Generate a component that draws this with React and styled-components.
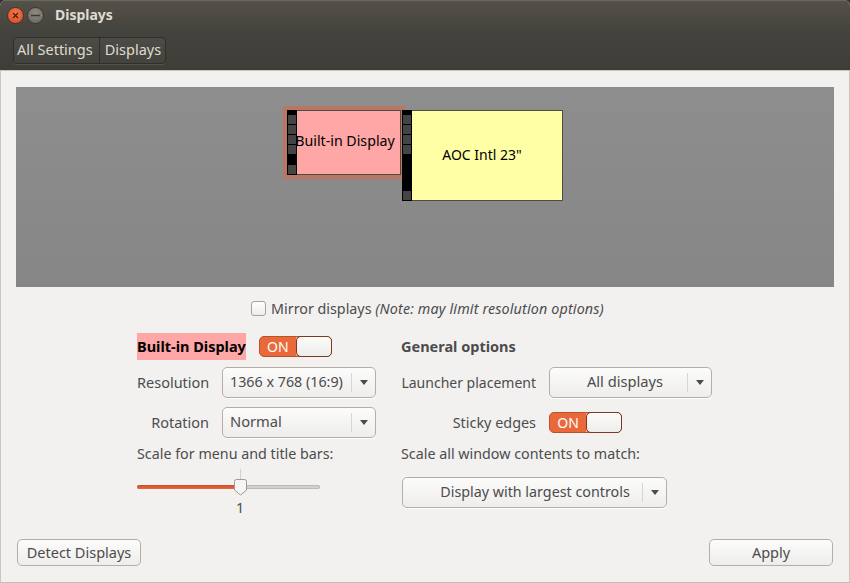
import React from "react"
import styled, { createGlobalStyle } from "styled-components"

const Global = createGlobalStyle`
  html, body {
    margin: 0;
    background: #3a2a38;
  }
  body {
    font-family: "Noto Sans", "Open Sans", sans-serif;
    font-size: 14.3px;
    color: #4c4c4c;
  }
`

const Window = styled.div`
  width: 850px;
  height: 583px;
  display: flex;
  flex-direction: column;
  overflow: hidden;
  border-radius: 6px 6px 0 0;
  background: #f2f1f0;
`

const TitleBar = styled.div`
  height: 30px;
  display: flex;
  align-items: center;
  padding-left: 7px;
  background: linear-gradient(#55524a, #45433d);
  box-shadow: inset 0 1px 0 #6a675f;
`

const WinButton = styled.div`
  width: 17px;
  height: 17px;
  margin-right: 3px;
  border-radius: 50%;
  display: flex;
  align-items: center;
  justify-content: center;
  border: 1px solid #3a3833;
  box-sizing: border-box;
  background: ${(p) =>
    p.$close
      ? "radial-gradient(circle at 50% 35%, #f47a4a, #d9451c)"
      : "radial-gradient(circle at 50% 35%, #8f8c84, #66635c)"};
`

const Title = styled.div`
  margin-left: 8px;
  padding-bottom: 2px;
  font-weight: 700;
  font-size: 14px;
  color: #dfdbd2;
`

const ToolBar = styled.div`
  height: 41px;
  display: flex;
  align-items: center;
  padding-left: 13px;
  box-sizing: border-box;
  background: linear-gradient(#45433d, #3f3d38);
  border-bottom: 1px solid #c9c6c0;
`

const Crumbs = styled.div`
  display: flex;
  height: 25px;
  border: 1px solid #2f2e2a;
  border-radius: 4px;
  box-shadow: 0 1px 0 #55534c;
  background: linear-gradient(#4d4b45, #45433d);
`

const Crumb = styled.div`
  padding: 0 6px 2px 3px;
  display: flex;
  align-items: center;
  font-size: 14.5px;
  color: #dfdbd2;
  & + & {
    padding: 0 4px 2px 5px;
    border-left: 1px solid #2f2e2a;
  }
`

const Content = styled.div`
  flex: 1;
  display: flex;
  flex-direction: column;
  padding: 16px;
  border-left: 1px solid #c9c6c0;
  border-right: 1px solid #c9c6c0;
  border-bottom: 1px solid #c0bdb8;
  box-sizing: border-box;
`

const Arrangement = styled.div`
  position: relative;
  height: 200px;
  margin: 0 -1px;
  background: linear-gradient(#8e8e8e, #868686);
`

const Monitor = styled.div`
  position: absolute;
  display: flex;
  box-sizing: border-box;
  border: 1px solid #4d4d40;
  color: #000;
  background: ${(p) => p.$bg};
  outline: ${(p) => (p.$selected ? "4px solid #b87765" : "none")};
`

const Film = styled.div`
  width: 10px;
  flex: none;
  margin: -1px 0 -1px -1px;
  display: flex;
  flex-direction: column;
  padding-top: 5px;
  gap: 1px;
  box-sizing: border-box;
  background: #000;
`

const Hole = styled.div`
  width: 8px;
  height: 9px;
  margin-left: 1px;
  background: #444;
  &:last-child {
    margin-top: auto;
    margin-bottom: 1px;
  }
`

const MonitorName = styled.div`
  flex: 1;
  display: flex;
  align-items: center;
  justify-content: center;
  white-space: nowrap;
  font-size: ${(p) => p.$size}px;
  margin-left: ${(p) => p.$shift}px;
  padding-bottom: ${(p) => p.$pb}px;
`

const MirrorRow = styled.div`
  height: 42px;
  padding-bottom: 2px;
  display: flex;
  align-items: center;
  justify-content: center;
  gap: 5px;
  margin-left: 5px;
`

const CheckBox = styled.div`
  width: 15px;
  height: 15px;
  box-sizing: border-box;
  border: 1px solid #a5a29c;
  border-radius: 3px;
  background: linear-gradient(#fff, #eeedeb);
`

const Note = styled.em`
  font-style: italic;
  letter-spacing: 0.15px;
`

const Columns = styled.div`
  display: grid;
  grid-template-columns: 264px 1fr;
  padding-left: 120px;
`

const Column = styled.div`
  display: flex;
  flex-direction: column;
`

const Row = styled.div`
  height: ${(p) => p.$h || 40}px;
  margin-top: ${(p) => p.$mt || 0}px;
  display: flex;
  align-items: center;
  white-space: nowrap;
`

const Heading = styled.div`
  font-weight: 700;
  font-size: 14.5px;
  color: ${(p) => (p.$hl ? "#000" : "#4c4c4c")};
  background: ${(p) => (p.$hl ? "#ffa6a6" : "none")};
  height: 27px;
  line-height: 27px;
  white-space: nowrap;
`

const Label = styled.div`
  width: ${(p) => p.$w}px;
  margin-right: 13px;
  text-align: right;
  white-space: nowrap;
  font-size: ${(p) => p.$size || 14.5}px;
`

const Combo = styled.div`
  width: ${(p) => p.$w}px;
  height: 31px;
  box-sizing: border-box;
  display: flex;
  align-items: center;
  border: 1px solid #b3afa8;
  border-radius: 5px;
  background: linear-gradient(#fcfcfb, #eeedeb);
  box-shadow: 0 1px 0 #fff;
  margin-left: ${(p) => p.$ml || 0}px;
`

const ComboText = styled.div`
  flex: 1;
  padding-left: ${(p) => p.$pl || 7}px;
  padding-bottom: 2px;
  text-align: ${(p) => (p.$center ? "center" : "left")};
  white-space: nowrap;
  font-size: ${(p) => p.$size || 14.3}px;
`

const ComboArrow = styled.div`
  width: 23px;
  height: 19px;
  flex: none;
  display: flex;
  align-items: center;
  justify-content: center;
  border-left: 1px solid #d8d6d2;
  &::after {
    content: "";
    border-left: 4.5px solid transparent;
    border-right: 4.5px solid transparent;
    border-top: 5px solid #4c4c4c;
  }
`

const Switch = styled.div`
  width: 73px;
  height: 21px;
  box-sizing: border-box;
  display: flex;
  border-radius: 5px;
  background: #e9693a;
  border: 1px solid #b5532d;
  margin-left: ${(p) => p.$ml || 0}px;
`

const SwitchText = styled.div`
  width: 37px;
  text-align: center;
  color: #fff;
  font-size: 14px;
  line-height: 19px;
  border-right: 1px solid #f4a98b;
  box-sizing: border-box;
`

const SwitchThumb = styled.div`
  flex: 1;
  margin: -1px;
  border: 1px solid #7c3a22;
  border-radius: 5px;
  background: linear-gradient(#fbfbfa, #eeedeb);
`

const Slider = styled.div`
  position: relative;
  width: 183px;
  height: 4px;
  border-radius: 2px;
  background: #d3d1cd;
  box-shadow: inset 0 0 0 1px #bdbab4;
`

const SliderFill = styled.div`
  height: 100%;
  border-radius: 2px;
  background: linear-gradient(#c9502a, #e9693a);
`

const Tick = styled.div`
  position: absolute;
  left: 103px;
  top: -16px;
  width: 1px;
  height: 10px;
  background: #d3d1cd;
`

const Thumb = styled.svg`
  position: absolute;
  left: 97px;
  top: -6px;
`

const SliderValue = styled.div`
  width: 206px;
  text-align: center;
  line-height: 18px;
`

const Footer = styled.div`
  margin-top: auto;
  display: flex;
  justify-content: space-between;
`

const Button = styled.div`
  width: 124px;
  height: 27px;
  padding-bottom: 2px;
  box-sizing: border-box;
  display: flex;
  align-items: center;
  justify-content: center;
  font-size: 14.5px;
  border: 1px solid #b3afa8;
  border-radius: 5px;
  background: linear-gradient(#fcfcfb, #eeedeb);
`

const holes = [0, 1, 2, 3, 4]

export default function App() {
  return (
    <Window>
      <Global />
      <TitleBar>
        <WinButton $close>
          <svg width="7" height="7" viewBox="0 0 7 7">
            <path d="M1 1 L6 6 M6 1 L1 6" stroke="#4a1c0c" strokeWidth="1.3" />
          </svg>
        </WinButton>
        <WinButton>
          <svg width="9" height="3" viewBox="0 0 9 3">
            <path d="M0 1.5 H9" stroke="#3c3b37" strokeWidth="1.3" />
          </svg>
        </WinButton>
        <Title>Displays</Title>
      </TitleBar>
      <ToolBar>
        <Crumbs>
          <Crumb>All Settings</Crumb>
          <Crumb>Displays</Crumb>
        </Crumbs>
      </ToolBar>
      <Content>
        <Arrangement>
          <Monitor
            $selected
            $bg="#ffa6a6"
            style={{ left: 271, top: 23, width: 114, height: 65 }}
          >
            <Film>
              {holes.map((h) => (
                <Hole key={h} />
              ))}
            </Film>
            <MonitorName $shift={-7} $size={14.2} $pb={5}>
              Built-in Display
            </MonitorName>
          </Monitor>
          <Monitor
            $bg="#ffffa6"
            style={{ left: 386, top: 23, width: 161, height: 91 }}
          >
            <Film>
              {holes.map((h) => (
                <Hole key={h} />
              ))}
            </Film>
            <MonitorName $shift={-10} $size={14} $pb={3}>
              AOC Intl 23"
            </MonitorName>
          </Monitor>
        </Arrangement>
        <MirrorRow>
          <CheckBox />
          <span>
            Mirror displays <Note>(Note: may limit resolution options)</Note>
          </span>
        </MirrorRow>
        <Columns>
          <Column>
            <Row $h={31}>
              <Heading $hl>Built-in Display</Heading>
              <Switch $ml={13}>
                <SwitchText>ON</SwitchText>
                <SwitchThumb />
              </Switch>
            </Row>
            <Row>
              <Label $w={72}>Resolution</Label>
              <Combo $w={154}>
                <ComboText>1366 x 768 (16:9)</ComboText>
                <ComboArrow />
              </Combo>
            </Row>
            <Row>
              <Label $w={72}>Rotation</Label>
              <Combo $w={154}>
                <ComboText $size={14.7}>Normal</ComboText>
                <ComboArrow />
              </Combo>
            </Row>
            <Row $h={22}>Scale for menu and title bars:</Row>
            <Row $h={24} $mt={11}>
              <Slider>
                <SliderFill style={{ width: "56%" }} />
                <Tick />
                <Thumb width="13" height="17" viewBox="0 0 13 17">
                  <path
                    d="M2.5 .5 H10.5 Q12.5 .5 12.5 2.5 V11 L6.5 16 L.5 11 V2.5 Q.5 .5 2.5 .5 Z"
                    fill="#f6f5f3"
                    stroke="#9c9992"
                  />
                </Thumb>
              </Slider>
            </Row>
            <SliderValue>1</SliderValue>
          </Column>
          <Column>
            <Row $h={31}>
              <Heading>General options</Heading>
            </Row>
            <Row>
              <Label $w={135} $size={14}>
                Launcher placement
              </Label>
              <Combo $w={163}>
                <ComboText $center $pl={13} $size={14.7}>
                  All displays
                </ComboText>
                <ComboArrow />
              </Combo>
            </Row>
            <Row>
              <Label $w={135} $size={14.4}>
                Sticky edges
              </Label>
              <Switch>
                <SwitchText>ON</SwitchText>
                <SwitchThumb />
              </Switch>
            </Row>
            <Row $h={22}>Scale all window contents to match:</Row>
            <Row $h={56}>
              <Combo $w={265} $ml={1}>
                <ComboText $center $pl={25}>
                  Display with largest controls
                </ComboText>
                <ComboArrow />
              </Combo>
            </Row>
          </Column>
        </Columns>
        <Footer>
          <Button>Detect Displays</Button>
          <Button>Apply</Button>
        </Footer>
      </Content>
    </Window>
  )
}
